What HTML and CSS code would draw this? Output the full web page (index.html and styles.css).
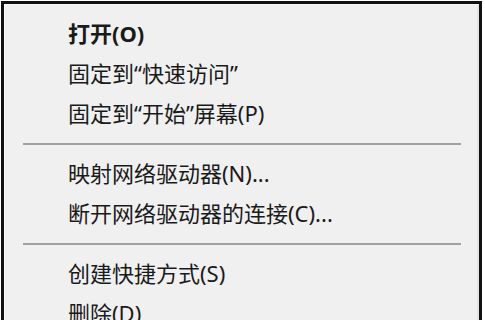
FILE: index.html
```html
<!DOCTYPE html>
<html lang="zh-CN">
<head>
    <meta charset="UTF-8">
    <meta name="viewport" content="width=device-width, initial-scale=1.0">
    <title>右键菜单</title>
    <link rel="stylesheet" href="styles.css">
</head>
<body>
    <div class="menu">
        <div class="item default">打开(O)</div>
        <div class="item">固定到“快速访问”</div>
        <div class="item">固定到“开始”屏幕(P)</div>
        <div class="sep"></div>
        <div class="item">映射网络驱动器(N)...</div>
        <div class="item">断开网络驱动器的连接(C)...</div>
        <div class="sep"></div>
        <div class="item">创建快捷方式(S)</div>
        <div class="item">删除(D)</div>
        <div class="item">重命名(M)</div>
    </div>
</body>
</html>
```

FILE: styles.css
```css
body {
    margin: 0;
    background: #fff;
    font-family: "Noto Sans", "Noto Sans CJK SC", sans-serif;
    overflow: hidden;
}
.menu {
    margin: 1px 0 0 1px;
    width: 475px;
    border: 3px solid #111;
    border-bottom: none;
    background: #f0f0f0;
    box-shadow: inset 1px 1px 0 #fafafa, inset -2px 0 0 #e4e4e4;
    padding-top: 9px;
}
.item {
    height: 40px;
    line-height: 40px;
    padding-left: 64px;
    font-size: 22px;
    color: #1a1a1a;
    white-space: nowrap;
}
.item.default {
    font-weight: bold;
}
.sep {
    height: 12px;
    margin: 0 18px 8px 19px;
    border-bottom: 2px solid #a0a0a0;
    box-sizing: border-box;
}
```
